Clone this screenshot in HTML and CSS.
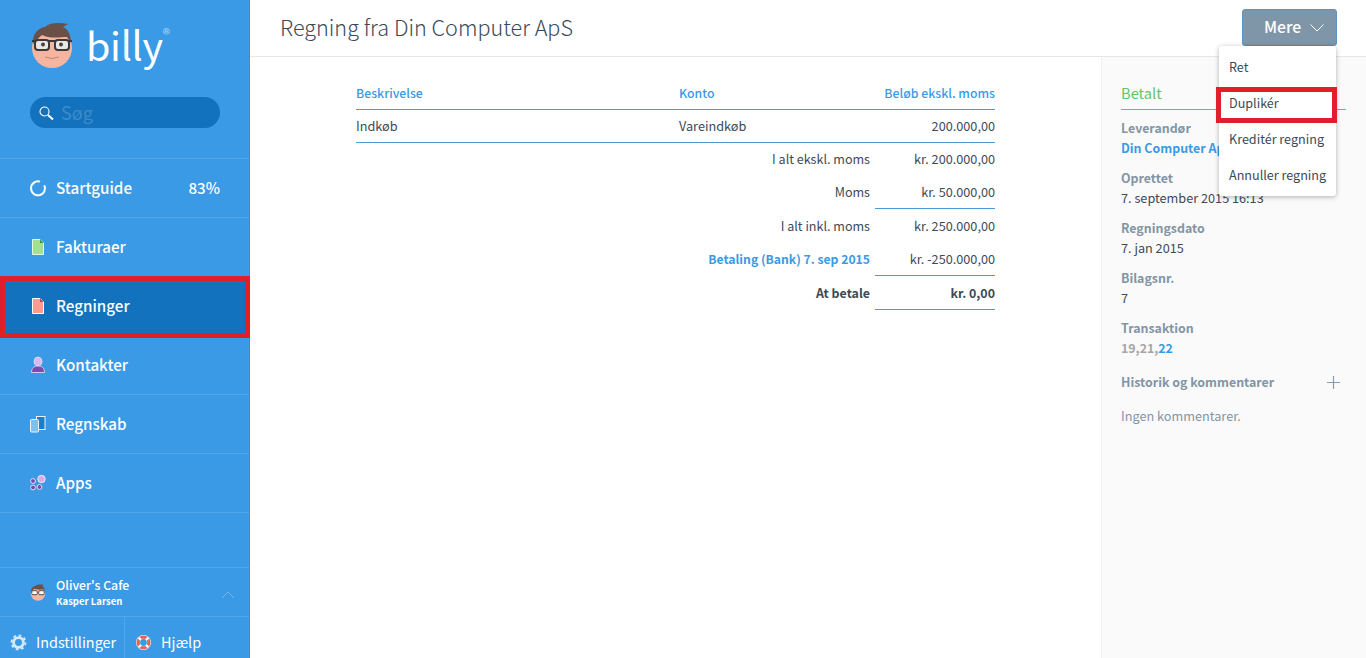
FILE: index.html
```html
<!DOCTYPE html>
<html lang="da">
<head>
<meta charset="utf-8">
<title>Regning fra Din Computer ApS</title>
<link rel="stylesheet" href="styles.css">
</head>
<body>
<div class="app">
  <aside class="sidebar">
    <div class="logo">
      <svg class="logo-face" viewBox="0 0 44 46" width="44" height="46">
        <circle cx="22" cy="26" r="20" fill="#f5b5a0"/>
        <path d="M3 22C2 12 8 6 15 5 19 1 27 0 38 2L33 5C38 7 41 13 41 21L37 15C30 15 20 17 12 13 9 16 6 18 3 22Z" fill="#6b5048"/>
        <path d="M2 19H42" stroke="#3a3a3a" stroke-width="2"/>
        <rect x="5" y="18" width="14" height="10" rx="3" fill="#e9e6e3" stroke="#3a3a3a" stroke-width="2"/>
        <rect x="25" y="18" width="14" height="10" rx="3" fill="#e9e6e3" stroke="#3a3a3a" stroke-width="2"/>
        <circle cx="13" cy="22.500" r="2" fill="#444"/>
        <circle cx="31" cy="22.500" r="2" fill="#444"/>
        <path d="M15 35Q22 38 29 35" stroke="#c9836f" stroke-width="1" fill="none"/>
      </svg>
      <span class="logo-text">billy</span><span class="logo-reg">®</span>
    </div>
    <div class="search">
      <svg viewBox="0 0 16 16" width="16" height="16"><circle cx="6.500" cy="6.500" r="4.500" fill="none" stroke="#fff" stroke-width="1.100"/><path d="M10 10l5 4.500" stroke="#fff" stroke-width="2"/></svg>
      <span class="search-text">Søg</span>
    </div>
    <nav class="nav">
      <a class="nav-item">
        <svg class="nav-icon" viewBox="0 0 18 18" width="18" height="18"><path d="M6.500 2.800A7 7 0 1 0 12 2.800" transform="rotate(40 9 9)" fill="none" stroke="#fff" stroke-width="2"/></svg>
        <span class="nav-label">Startguide</span><span class="nav-pct">83%</span>
      </a>
      <a class="nav-item">
        <svg class="nav-icon" viewBox="0 0 18 18" width="18" height="18"><path d="M3.500 1.500H11L14.500 5V16.500H3.500Z" fill="#a3e08f" stroke="#eaf7e4" stroke-width="1" stroke-linejoin="round"/><path d="M11 1.500V5H14.500Z" fill="#3a8f5a"/></svg>
        <span class="nav-label">Fakturaer</span>
      </a>
      <a class="nav-item is-active">
        <svg class="nav-icon" viewBox="0 0 18 18" width="18" height="18"><path d="M3.500 1.500H11L14.500 5V16.500H3.500Z" fill="#fb9c8c" stroke="#fff" stroke-width="1" stroke-linejoin="round"/><path d="M11 1.500V5H14.500Z" fill="#b8434f"/></svg>
        <span class="nav-label">Regninger</span>
      </a>
      <a class="nav-item">
        <svg class="nav-icon" viewBox="0 0 18 18" width="18" height="18"><ellipse cx="9" cy="5.500" rx="3.800" ry="4.300" fill="#d9b8ef" stroke="#efe4fa"/><path d="M2.500 16.500C2.500 12 5 10 9 10S15.500 12 15.500 16.500Z" fill="#7a4bb0" stroke="#d9c6ef"/></svg>
        <span class="nav-label">Kontakter</span>
      </a>
      <a class="nav-item">
        <svg class="nav-icon" viewBox="0 0 18 18" width="18" height="18"><rect x="7.500" y="1.500" width="8.500" height="13" fill="#1f7cc6" stroke="#eaf5fd"/><rect x="1.500" y="4.500" width="8" height="12.500" rx="1" fill="#7cc0f2" stroke="#eaf5fd"/></svg>
        <span class="nav-label">Regnskab</span>
      </a>
      <a class="nav-item">
        <svg class="nav-icon" viewBox="0 0 18 18" width="18" height="18"><circle cx="12.500" cy="5" r="3.700" fill="#dba8e8" stroke="#eee"/><circle cx="4" cy="7" r="2.400" fill="#6f49a8" stroke="#e8def5"/><circle cx="4" cy="13.500" r="2.400" fill="#6f49a8" stroke="#e8def5"/><circle cx="10.500" cy="13" r="2.400" fill="#6f49a8" stroke="#e8def5"/></svg>
        <span class="nav-label">Apps</span>
      </a>
    </nav>
    <div class="org">
      <svg class="org-face" viewBox="0 0 44 46" width="16" height="17">
        <circle cx="22" cy="26" r="20" fill="#f5b5a0"/>
        <path d="M3 22C2 12 8 6 15 5 19 1 27 0 38 2L33 5C38 7 41 13 41 21L37 15C30 15 20 17 12 13 9 16 6 18 3 22Z" fill="#6b5048"/>
        <rect x="5" y="18" width="15" height="11" rx="3" fill="#fff" stroke="#3a3a3a" stroke-width="2.400"/>
        <rect x="24" y="18" width="15" height="11" rx="3" fill="#fff" stroke="#3a3a3a" stroke-width="2.400"/>
      </svg>
      <div class="org-text">
        <div class="org-name">Oliver's Cafe</div>
        <div class="org-user">Kasper Larsen</div>
      </div>
      <svg class="org-chev" viewBox="0 0 14 8" width="14" height="8"><path d="M1 7l6-6 6 6" fill="none" stroke="#6db5ec" stroke-width="1"/></svg>
    </div>
    <div class="bottom">
      <a class="bottom-item bottom-settings">
        <svg viewBox="0 0 18 18" width="17" height="17"><circle cx="9" cy="9" r="5.200" fill="none" stroke="#d5e9f9" stroke-width="3"/><circle cx="9" cy="9" r="7.400" fill="none" stroke="#d5e9f9" stroke-width="2" stroke-dasharray="2.900 2.900"/></svg>
        <span>Indstillinger</span>
      </a>
      <a class="bottom-item bottom-help">
        <svg viewBox="0 0 18 18" width="17" height="17"><circle cx="9" cy="9" r="8" fill="#fff"/><circle cx="9" cy="9" r="5.700" fill="none" stroke="#e5655a" stroke-width="3.600"/><path d="M4 4l3 3M14 4l-3 3M4 14l3-3M14 14l-3-3" stroke="#fff" stroke-width="2.400"/><circle cx="9" cy="9" r="3.600" fill="#3a9ae6"/></svg>
        <span>Hjælp</span>
      </a>
    </div>
  </aside>
  <div class="main">
    <header class="topbar">
      <h1 class="title">Regning fra Din Computer ApS</h1>
      <div class="more">
        <button class="more-btn"><span class="more-label">Mere</span>
          <svg viewBox="0 0 14 8" width="14" height="8"><path d="M.5.500l6.500 6.500 6.500-6.500" fill="none" stroke="#fff" stroke-width="1"/></svg>
        </button>
        <ul class="menu">
          <li class="menu-item">Ret</li>
          <li class="menu-item menu-marked">Duplikér</li>
          <li class="menu-item">Kreditér regning</li>
          <li class="menu-item">Annuller regning</li>
        </ul>
      </div>
    </header>
    <div class="content">
      <section class="doc">
        <div class="row row-head">
          <div class="c-desc">Beskrivelse</div><div class="c-acct">Konto</div><div class="c-amt">Beløb ekskl. moms</div>
        </div>
        <div class="row row-line">
          <div class="c-desc">Indkøb</div><div class="c-acct">Vareindkøb</div><div class="c-amt">200.000,00</div>
        </div>
        <div class="sum"><div class="sum-label">I alt ekskl. moms</div><div class="sum-val">kr. 200.000,00</div></div>
        <div class="sum sum-rule sum-moms"><div class="sum-label">Moms</div><div class="sum-val">kr. 50.000,00</div></div>
        <div class="sum sum-low"><div class="sum-label">I alt inkl. moms</div><div class="sum-val">kr. 250.000,00</div></div>
        <div class="sum sum-low sum-rule sum-pay"><div class="sum-label sum-link">Betaling (Bank) 7. sep 2015</div><div class="sum-val">kr. -250.000,00</div></div>
        <div class="sum sum-low sum-rule sum-pay sum-total"><div class="sum-label">At betale</div><div class="sum-val">kr. 0,00</div></div>
      </section>
      <aside class="panel">
        <div class="status">Betalt</div>
        <div class="field"><div class="field-label">Leverandør</div><div class="field-link">Din Computer ApS</div></div>
        <div class="field"><div class="field-label">Oprettet</div><div class="field-val">7. september 2015 16:13</div></div>
        <div class="field"><div class="field-label">Regningsdato</div><div class="field-val">7. jan 2015</div></div>
        <div class="field"><div class="field-label">Bilagsnr.</div><div class="field-val">7</div></div>
        <div class="field"><div class="field-label">Transaktion</div><div class="field-tx">19,21,<span class="tx-link">22</span></div></div>
        <div class="history"><span class="field-label">Historik og kommentarer</span>
          <svg viewBox="0 0 13 13" width="13" height="13"><path d="M6.500 0v13M0 6.500h13" stroke="#8a9cab" stroke-width="1.200"/></svg>
        </div>
        <div class="nocomment">Ingen kommentarer.</div>
      </aside>
    </div>
  </div>
</div>
</body>
</html>
```
FILE: styles.css
```css
* { box-sizing: border-box; }
html, body { margin: 0; height: 100%; }
body {
  font-family: "Noto Sans CJK JP", "Noto Sans", sans-serif;
  font-size: 12.700px;
  color: #3c4a57;
  background: #fff;
  overflow: hidden;
}
.app { display: flex; height: 658px; }

/* Sidebar */
.sidebar {
  width: 250px;
  flex: none;
  background: #3a9ae6;
  color: #fff;
  display: flex;
  flex-direction: column;
  height: 100%;
  border-right: 1px solid #3490da;
}
.logo { display: flex; align-items: flex-start; height: 97px; padding: 22px 0 0 30px; }
.logo-face { flex: none; }
.logo-text {
  font-weight: 400;
  font-size: 39.500px;
  line-height: 44px;
  margin-left: 12px;
  letter-spacing: -.3px;
}
.logo-reg { font-size: 15px; line-height: 14px; margin: 5px 0 0 0; color: #a9d5f6; }
.search {
  margin-left: 30px;
  width: 190px;
  height: 31px;
  border-radius: 16px;
  background: #1272bd;
  display: flex;
  align-items: center;
  padding-left: 8px;
  gap: 7px;
}
.search svg { flex: none; }
.search-text { color: #3d8bc9; font-size: 18px; line-height: 31px; }
.nav { margin-top: 30px; border-top: 1px solid #4fa6ea; }
.nav-item {
  display: flex;
  align-items: center;
  height: 59px;
  padding: 0 29px 0 29px;
  border-bottom: 1px solid #4fa6ea;
  font-size: 15.200px;
  font-weight: 500;
  line-height: 22px;
}
.nav-icon { flex: none; margin-right: 9px; }
.nav-label { flex: 1; padding-bottom: 2px; }
.nav-pct { flex: none; padding-bottom: 2px; }
.is-active {
  background: #1272bd;
  position: relative;
  border-bottom-color: #1272bd;
}
.is-active::after {
  content: "";
  box-sizing: border-box;
  position: absolute;
  left: 0; right: -1px; top: -1px; height: 62px;
  border: 5px solid #e21e2b;
}
.org {
  margin-top: auto;
  height: 50px;
  display: flex;
  align-items: center;
  padding: 0 14px 0 30px;
  border-top: 1px solid #4fa6ea;
  border-bottom: 1px solid #4fa6ea;
}
.org-face { flex: none; margin-right: 10px; }
.org-text { flex: 1; padding-top: 1px; }
.org-name { font-size: 12.300px; line-height: 17px; font-weight: 500; }
.org-user { font-size: 9.500px; line-height: 15px; font-weight: 700; }
.org-chev { flex: none; margin-top: 6px; }
.bottom { display: flex; height: 41px; font-size: 14.400px; font-weight: 400; }
.bottom-item { display: flex; align-items: center; line-height: 24px; padding-top: 9px; }
.bottom-item svg { flex: none; }
.bottom-settings { width: 125px; padding-left: 10px; gap: 9px; border-right: 1px solid #4fa6ea; }
.bottom-help { padding-left: 10px; gap: 9px; }

/* Main */
.main { flex: 1; min-width: 0; display: flex; flex-direction: column; }
.topbar {
  height: 57px;
  flex: none;
  border-bottom: 1px solid #e4e6e8;
  display: flex;
  justify-content: space-between;
  padding: 9px 29px 0 30px;
}
.title { margin: 0; font-size: 21.600px; line-height: 36px; font-weight: 300; color: #3c4a57; }
.more { position: relative; width: 95px; }
.more-btn {
  width: 95px;
  height: 37px;
  background: #7f96a9;
  border: 1px solid #5d93c0;
  border-radius: 3px;
  color: #fff;
  font: 500 15.800px/22px "Noto Sans CJK JP", sans-serif;
  display: flex;
  align-items: center;
  padding: 0 13px 0 21px;
  gap: 9px;
}
.more-label { padding-bottom: 1px; }
.more-btn svg { flex: none; }
.menu {
  position: absolute;
  z-index: 2;
  top: 37px;
  right: 1px;
  width: 117px;
  margin: 0;
  padding: 3px 0 3px;
  list-style: none;
  background: #fff;
  border-radius: 3px;
  box-shadow: 0 1px 5px rgba(0, 0, 0, .3);
}
.menu-item {
  height: 36px;
  padding-left: 10px;
  line-height: 35px;
  font-size: 12.600px;
  color: #3c4a57;
  white-space: nowrap;
}
.menu-marked { position: relative; }
.menu-marked::after {
  content: "";
  box-sizing: border-box;
  position: absolute;
  left: -3px; right: -1px; top: 2px; bottom: -2px;
  border: 5px solid #e21e2b;
}

.content { flex: 1; display: flex; min-height: 0; }
.doc { flex: 1; padding: 20px 106px 0 106px; }
.row { display: flex; height: 33px; line-height: 30px; border-bottom: 1px solid #4c9bd6; }
.row-head { color: #3a9ae6; font-weight: 500; font-size: 12.300px; line-height: 32px; }
.row-line { line-height: 32px; }
.c-desc { width: 323px; }
.c-acct { flex: 1; }
.c-amt { text-align: right; }
.sum { display: flex; justify-content: flex-end; height: 33px; line-height: 31px; }
.sum-label { flex: 1; text-align: right; padding-right: 5px; font-size: 12.550px; }
.sum-val { width: 120px; text-align: right; }
.sum-rule { height: 34px; }
.sum-moms { height: 33px; }
.sum-low { line-height: 33px; }
.sum-pay .sum-label { line-height: 35px; }
.sum-rule .sum-val { border-bottom: 1px solid #4c9bd6; }
.sum-label.sum-link { color: #3a9ae6; font-weight: 700; font-size: 12.200px; }
.sum-total { font-weight: 700; }
.sum-total .sum-label, .sum-total .sum-val { font-size: 12.400px; line-height: 35px; }

.panel {
  width: 265px;
  flex: none;
  background: #fafafa;
  border-left: 1px solid #f0f0f0;
  padding: 26px 20px 0 19px;
  line-height: 20px;
}
.status {
  color: #62c46d;
  font-size: 14.700px;
  line-height: 20px;
  padding-bottom: 6px;
  border-bottom: 1px solid #62c46d;
  margin-bottom: 8px;
}
.field { height: 50px; }
.field-label { color: #8295a5; font-weight: 700; font-size: 12.400px; }
.field-link { color: #3a9ae6; font-weight: 700; white-space: nowrap; font-size: 12.400px; }
.field-val { color: #3c4a57; }
.field-tx { color: #a6a6a6; font-weight: 700; font-size: 12.400px; }
.tx-link { color: #3a9ae6; }
.history { display: flex; justify-content: space-between; align-items: center; height: 20px; margin-top: 4px; padding-right: 6px; }
.nocomment { margin-top: 14px; color: #8295a5; }
```
